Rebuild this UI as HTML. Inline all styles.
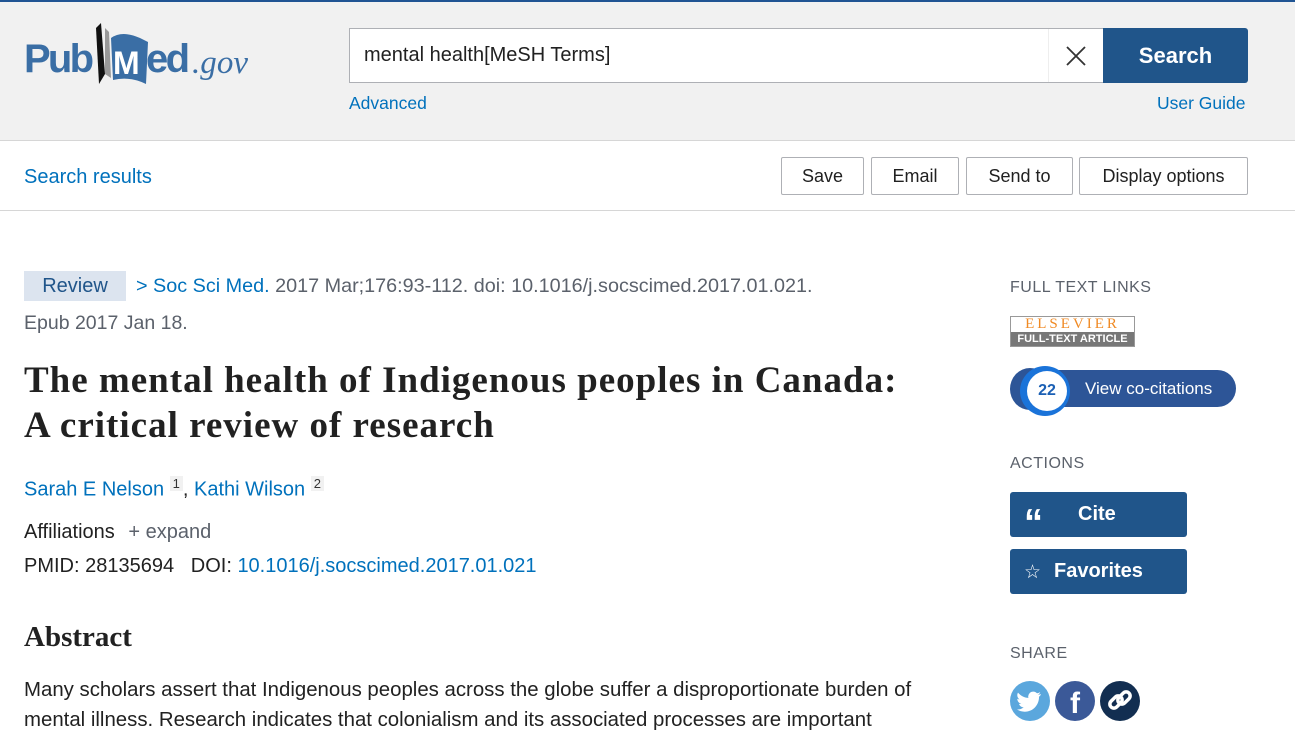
<!DOCTYPE html>
<html><head><meta charset="utf-8"><style>
*{margin:0;padding:0;box-sizing:border-box}
body{width:1295px;height:720px;overflow:hidden;background:#fff;font-family:"Liberation Sans",Arial,sans-serif;color:#212121;position:relative}
.a{position:absolute}
a{color:#0071bc;text-decoration:none}
.hdr{left:0;top:0;width:1295px;height:141px;background:#f1f1f1;border-top:2px solid #205493;border-bottom:1px solid #d6d6d6}
.btn{position:absolute;top:157px;height:38px;border:1px solid #aeb0b5;background:#fff;font-size:18px;color:#212121;text-align:center;line-height:36px;border-radius:2px}
.blue{background:#20558a;color:#fff;border-radius:3px;font-weight:bold;font-size:20px}
.lbl{font-size:16px;color:#5b616b;letter-spacing:0.5px}
</style></head><body>
<div class="a hdr"></div>
<div class="a" style="left:24px;top:20px;width:230px;height:68px">
<svg width="230" height="68" viewBox="0 0 230 68">
<text x="0" y="52" font-family="Liberation Sans" font-weight="bold" font-size="40" fill="#3a6ea5" textLength="70">Pub</text>
<path d="M72 8 L77 3 L81 54 L75 64 Z" fill="#111"/>
<path d="M81 8 L85 12 L87 58 L81 54 Z" fill="#999"/>
<path d="M87 18 Q98 10 116 18 L124 22 L122 64 Q106 56 89 60 Z" fill="#3a6ea5"/>
<text x="89" y="54" font-family="Liberation Sans" font-weight="bold" font-size="32" fill="#fff">M</text>
<text x="122" y="52" font-family="Liberation Sans" font-weight="bold" font-size="40" fill="#3a6ea5" textLength="44">ed</text>
<text x="168" y="53" font-family="Liberation Serif" font-style="italic" font-size="33" fill="#3a6ea5" textLength="56">.gov</text>
</svg></div>
<div class="a" style="left:349px;top:28px;width:754px;height:55px;background:#fff;border:1px solid #aeb0b5;border-right:none;font-size:20px;line-height:53px;padding-left:14px">mental health[MeSH Terms]</div>
<div class="a" style="left:1048px;top:29px;width:55px;height:53px;background:#fff;border-left:1px solid #eee">
<svg width="55" height="53"><path d="M18 18 L36 36 M36 18 L18 36" stroke="#333" stroke-width="1.8"/></svg></div>
<div class="a blue" style="left:1103px;top:28px;width:145px;height:55px;border-radius:0 3px 3px 0;font-size:22px;line-height:55px;text-align:center">Search</div>
<a class="a" style="left:349px;top:93px;font-size:17.5px">Advanced</a>
<a class="a" style="left:1157px;top:93px;font-size:17.5px">User Guide</a>
<a class="a" style="left:24px;top:166px;font-size:20px">Search results</a>
<div class="btn" style="left:781px;width:83px">Save</div>
<div class="btn" style="left:871px;width:88px">Email</div>
<div class="btn" style="left:966px;width:107px">Send to</div>
<div class="btn" style="left:1079px;width:169px">Display options</div>
<div class="a" style="left:0;top:210px;width:1295px;height:1px;background:#d6d6d6"></div>

<div class="a" style="left:24px;top:271px;width:102px;height:30px;background:#dce4ef;color:#20558a;font-size:20px;text-align:center;line-height:30px">Review</div>
<div class="a" style="left:136px;top:275px;font-size:19.8px;color:#5b616b;white-space:nowrap"><span style="color:#0071bc">&gt; Soc Sci Med.</span> 2017 Mar;176:93-112. doi: 10.1016/j.socscimed.2017.01.021.</div>
<div class="a" style="left:24px;top:312px;font-size:19.5px;color:#5b616b">Epub 2017 Jan 18.</div>
<div class="a" style="left:24px;top:358px;font-family:'Liberation Serif',serif;font-weight:bold;font-size:37px;letter-spacing:1px;line-height:45px;color:#212121;white-space:nowrap">The mental health of Indigenous peoples in Canada:<br>A critical review of research</div>
<div class="a" style="left:24px;top:476px;font-size:20px"><a>Sarah E Nelson</a> <sup style="font-size:13px;background:#f1f1f1;padding:0 3px;color:#333">1</sup>, <a>Kathi Wilson</a> <sup style="font-size:13px;background:#f1f1f1;padding:0 3px;color:#333">2</sup></div>
<div class="a" style="left:24px;top:521px;font-size:20px">Affiliations <span style="color:#5b616b;margin-left:8px">+ expand</span></div>
<div class="a" style="left:24px;top:555px;font-size:20px">PMID: 28135694 &nbsp;&nbsp;DOI: <a>10.1016/j.socscimed.2017.01.021</a></div>
<div class="a" style="left:24px;top:621px;font-family:'Liberation Serif',serif;font-weight:bold;font-size:29px">Abstract</div>
<div class="a" style="left:24px;top:675px;font-size:20.4px;line-height:30px;white-space:nowrap">Many scholars assert that Indigenous peoples across the globe suffer a disproportionate burden of<br>mental illness. Research indicates that colonialism and its associated processes are important</div>

<div class="a lbl" style="left:1010px;top:279px">FULL TEXT LINKS</div>
<div class="a" style="left:1010px;top:316px;width:125px;height:31px;border:1px solid #999;background:#fff">
<div style="height:15px;color:#f08a24;font-family:'Liberation Serif',serif;font-size:15px;letter-spacing:3px;text-align:center;line-height:15px">ELSEVIER</div>
<div style="height:14px;background:#777;color:#fff;font-size:11px;font-weight:bold;text-align:center;line-height:14px">FULL-TEXT ARTICLE</div></div>
<div class="a" style="left:1040px;top:370px;width:196px;height:37px;background:#2d5597;border-radius:19px;color:#fff;font-size:17px;line-height:37px;padding-left:45px">View co-citations</div>
<div class="a" style="left:1010px;top:368px;width:40px;height:42px;border-radius:50%;background:#2d5597"></div>
<div class="a" style="left:1020px;top:366px;width:50px;height:50px;border-radius:50%;background:#1a73d9"></div>
<div class="a" style="left:1027px;top:371px;width:40px;height:40px;border-radius:50%;background:#fff;color:#1a5fb4;font-weight:bold;font-size:16px;text-align:center;line-height:40px">22</div>
<div class="a lbl" style="left:1010px;top:455px">ACTIONS</div>
<div class="a blue" style="left:1010px;top:492px;width:177px;height:45px;line-height:45px"><span style="position:absolute;left:14px;font-size:38px;font-family:'Liberation Sans',sans-serif;top:9px">“</span><span style="position:absolute;left:68px">Cite</span></div>
<div class="a blue" style="left:1010px;top:549px;width:177px;height:45px;line-height:45px"><span style="position:absolute;left:14px;top:1px;font-size:19px;font-weight:normal">☆</span><span style="position:absolute;left:44px">Favorites</span></div>
<div class="a lbl" style="left:1010px;top:645px">SHARE</div>
<div class="a" style="left:1010px;top:681px;width:40px;height:40px;border-radius:50%;background:#5ba7dd">
<svg width="40" height="40" viewBox="0 0 40 40"><path d="M31 13c-1 .5-2 .7-3 .8 1-.6 1.9-1.6 2.2-2.7-1 .6-2 1-3.2 1.2a5 5 0 0 0-8.6 4.6C14.3 16.7 10.6 14.7 8 11.6c-1.4 2.400-.6 5.300 1.600 6.800-.8 0-1.6-.2-2.300-.6 0 2.400 1.700 4.500 4 5-.7.2-1.500.2-2.300.1.6 2 2.500 3.500 4.700 3.500A10 10 0 0 1 7 28.500c2.200 1.400 4.900 2.200 7.700 2.200 9.300 0 14.300-7.700 14.300-14.300v-.7c1-.7 1.800-1.600 2-2.700z" fill="#fff"/></svg></div>
<div class="a" style="left:1055px;top:681px;width:40px;height:40px;border-radius:50%;background:#3b5998;color:#fff;text-align:center;font-weight:bold;font-size:30px;line-height:46px">f</div>
<div class="a" style="left:1100px;top:681px;width:40px;height:40px;border-radius:50%;background:#122e51">
<svg width="40" height="40"><g fill="none" stroke="#fff" stroke-width="3.5"><rect x="9" y="17" width="14" height="8" rx="4" transform="rotate(-45 16 21)"/><rect x="17" y="13" width="14" height="8" rx="4" transform="rotate(-45 24 17)"/></g></svg></div>
</body></html>
